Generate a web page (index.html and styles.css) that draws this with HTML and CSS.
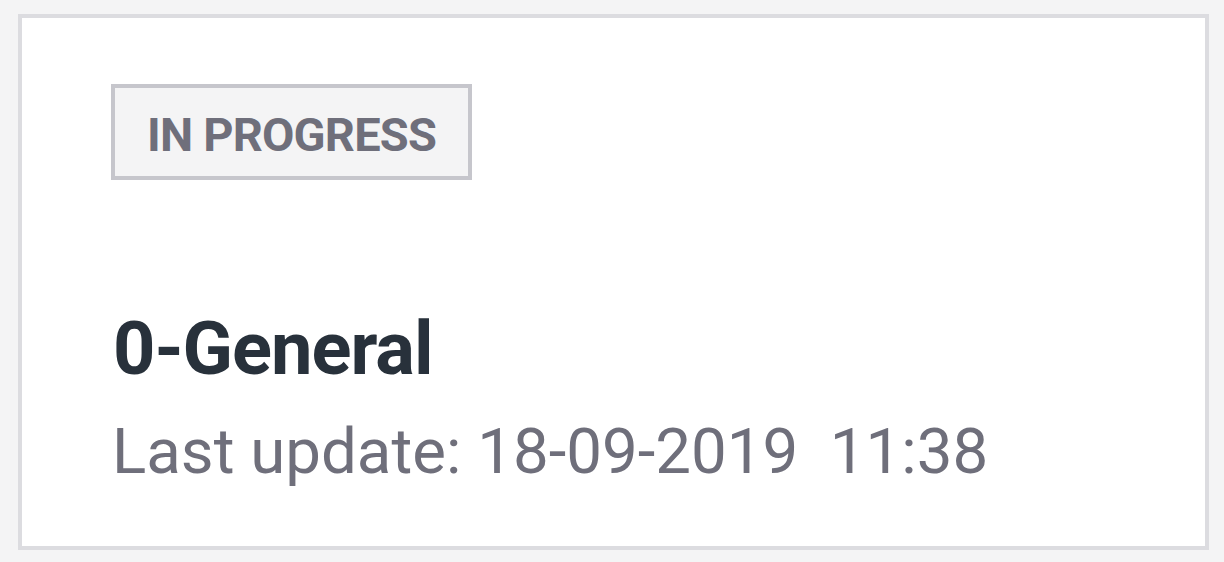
FILE: index.html
```html
<!DOCTYPE html>
<html lang="en">
<head>
<meta charset="utf-8">
<title>Status card</title>
<link rel="stylesheet" href="styles.css">
</head>
<body>
  <div class="card">
    <span class="badge">IN PROGRESS</span>
    <h1 class="title">0-General</h1>
    <p class="meta">Last update: 18-09-2019&nbsp; 11:38</p>
  </div>
</body>
</html>
```

FILE: styles.css
```css
html, body {
  margin: 0;
  padding: 0;
}

body {
  background: #f4f4f5;
  width: 1224px;
  height: 562px;
  padding: 14px 15px 12px 18px;
  box-sizing: border-box;
  font-family: Roboto, "Liberation Sans", sans-serif;
}

.card {
  box-sizing: border-box;
  width: 1191px;
  height: 536px;
  background: #ffffff;
  border: 4px solid #dcdce0;
  padding: 66px 0 0 89px;
  display: flex;
  flex-direction: column;
  align-items: flex-start;
}

.badge {
  display: block;
  box-sizing: border-box;
  height: 96px;
  background: #f4f4f5;
  border: 4px solid #c6c6cc;
  padding: 23px 32px 0 32px;
  font-size: 47px;
  line-height: 1;
  font-weight: 700;
  color: #6f6f7b;
  letter-spacing: -0.8px;
}

.title {
  margin: 132px 0 0 2px;
  font-size: 74px;
  line-height: 1;
  font-weight: 700;
  color: #28313b;
  letter-spacing: -1px;
}

.meta {
  margin: 34px 0 0 1px;
  font-size: 63.6px;
  line-height: 1;
  font-weight: 400;
  color: #6f6f7b;
}
```
